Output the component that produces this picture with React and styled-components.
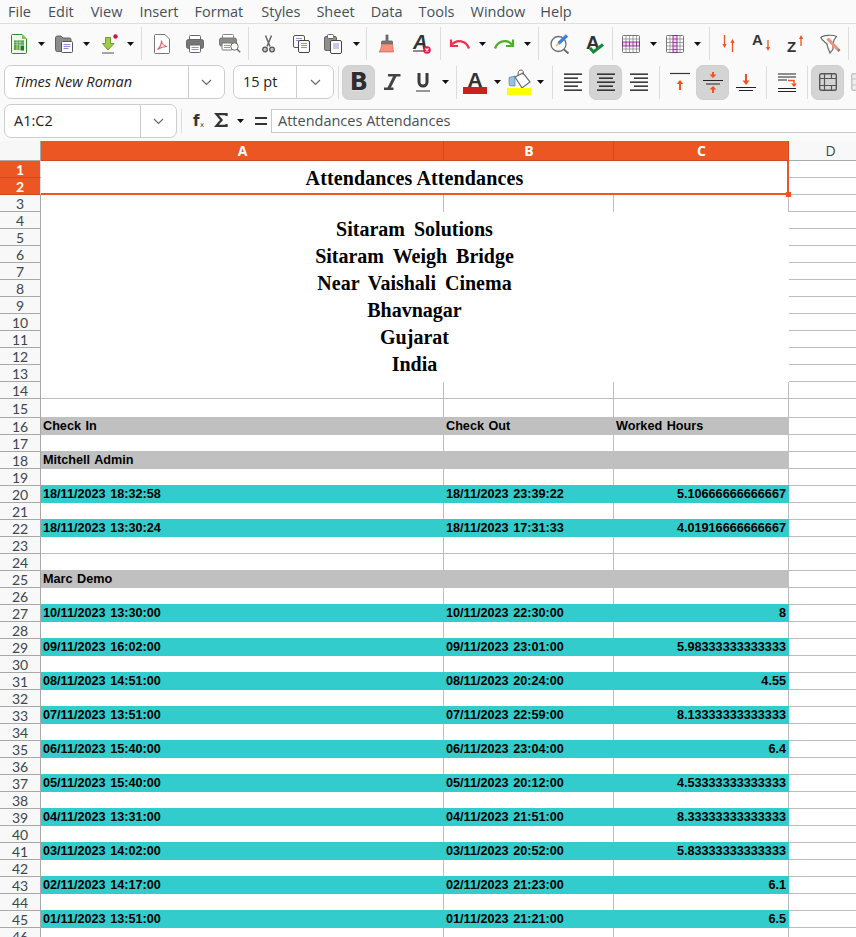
import React from "react";
import styled, { createGlobalStyle } from "styled-components";

const UI_FONT = `"Open Sans", "Noto Sans", sans-serif`;
const ORANGE = "#ec5622";

const GlobalStyle = createGlobalStyle`
  html, body {
    margin: 0;
    padding: 0;
    background: #fafafa;
  }
  svg {
    overflow: visible;
  }
`;

const Window = styled.div`
  width: 856px;
  height: 937px;
  overflow: hidden;
  background: #fafafa;
  font-family: ${UI_FONT};
  color: #3d3d3d;
`;

const MenuBar = styled.div`
  display: flex;
  height: 23px;
  border-bottom: 1px solid #dedede;
  font-size: 14.5px;
  line-height: 23px;
  color: #45505a;
`;

const MenuItem = styled.span`
  margin-left: ${(p) => p.$gap}px;
`;

const Toolbar = styled.div`
  display: flex;
  align-items: center;
  height: ${(p) => p.$h}px;
`;

const Tool = styled.div`
  display: flex;
  flex: none;
  margin-left: ${(p) => p.$gap}px;
`;

const Sep = styled.div`
  flex: none;
  width: 1px;
  height: 33px;
  margin-left: ${(p) => p.$gap}px;
  background: #dddddd;
`;

const ToggleButton = styled.div`
  display: flex;
  flex: none;
  align-items: center;
  justify-content: center;
  width: 33px;
  height: 35px;
  margin-left: ${(p) => p.$gap}px;
  box-sizing: border-box;
  border: 1px solid #cfcfcf;
  border-radius: 7px;
  background: #d4d4d4;
`;

const Combo = styled.div`
  display: flex;
  flex: none;
  width: ${(p) => p.$w}px;
  height: 34px;
  margin-left: ${(p) => p.$gap}px;
  box-sizing: border-box;
  border: 1px solid #cdcdcd;
  border-radius: 7px;
  background: #ffffff;
`;

const ComboText = styled.div`
  flex: 1;
  padding-left: 9px;
  font-size: 14.5px;
  line-height: 32px;
  color: #222222;
  font-style: ${(p) => (p.$italic ? "italic" : "normal")};
  white-space: nowrap;
`;

const ComboArrow = styled.div`
  display: flex;
  flex: none;
  align-items: center;
  justify-content: center;
  width: ${(p) => p.$w}px;
  border-left: 1px solid #cdcdcd;
`;

const FormulaBar = styled.div`
  display: flex;
  align-items: flex-start;
  height: 37px;
  padding-top: 3px;
`;

const FormulaTool = styled(Tool)`
  margin-top: ${(p) => p.$top}px;
`;

const FormulaSep = styled(Sep)`
  height: 24px;
  margin-top: 5px;
`;

const FormulaInput = styled.div`
  flex: 1;
  height: 24px;
  margin: 5px 0 0 4px;
  padding-left: 6px;
  box-sizing: border-box;
  border: 1px solid #c9c9c9;
  border-right: 0;
  background: #ffffff;
  font-size: 14.5px;
  line-height: 22px;
  color: #45505a;
  white-space: nowrap;
`;

const Sheet = styled.div`
  display: grid;
  grid-template-columns: 41px 403px 170px 175px 84px;
  grid-template-rows: 20px repeat(14, 17px) 19px repeat(31, 17px);
  background: #ffffff;
`;

const Corner = styled.div`
  background: #f7f7f7;
  border-right: 1px solid #a8a8a8;
  border-bottom: 1px solid #a8a8a8;
`;

const ColHead = styled.div`
  display: flex;
  align-items: center;
  justify-content: center;
  box-sizing: border-box;
  padding-left: ${(p) => (p.$on ? 1 : 0)}px;
  font-size: 14px;
  font-weight: ${(p) => (p.$on ? 700 : 400)};
  color: ${(p) => (p.$on ? "#ffffff" : "#3c4650")};
  background: ${(p) => (p.$on ? ORANGE : "#f8f8f8")};
  border-right: 1px solid ${(p) => (p.$on ? "#cf4a1c" : "#a8a8a8")};
  border-bottom: 1px solid ${(p) => (p.$on ? "#cf4a1c" : "#a8a8a8")};
`;

const RowHead = styled.div`
  display: flex;
  align-items: center;
  justify-content: center;
  box-sizing: border-box;
  padding-top: 1px;
  font-family: Lato, "Open Sans", sans-serif;
  font-size: 14px;
  line-height: 1;
  font-weight: ${(p) => (p.$on ? 700 : 400)};
  color: ${(p) => (p.$on ? "#ffffff" : "#3c4650")};
  background: ${(p) => (p.$on ? ORANGE : "#f8f8f8")};
  border-right: 1px solid ${(p) => (p.$on ? "#e0e0e0" : "#a8a8a8")};
  border-bottom: 1px solid ${(p) => (p.$on ? "#cf4a1c" : "#a8a8a8")};
`;

const Cell = styled.div`
  box-sizing: border-box;
  min-width: 0;
  padding: 0 2px;
  font-family: "Liberation Sans", Arial, sans-serif;
  font-size: 12.67px;
  font-weight: 700;
  word-spacing: 1px;
  color: #000000;
  white-space: nowrap;
  text-align: ${(p) => (p.$right ? "right" : "left")};
  border-right: 1px solid ${(p) => p.$fill || "#bdbdbd"};
  border-bottom: ${(p) => (p.$noBottom ? "0" : `1px solid ${p.$fill || "#bdbdbd"}`)};
  background: ${(p) => p.$fill || "#ffffff"};
  margin-top: ${(p) => (p.$fill ? "-1px" : "0")};
  line-height: ${(p) => (p.$fill ? "18px" : "16px")};
`;

const OuterCell = styled.div`
  box-sizing: border-box;
  background: #ffffff;
  border-bottom: 1px solid #bdbdbd;
`;

const TitleCell = styled.div`
  position: relative;
  grid-column: span 3;
  grid-row: span 2;
  display: flex;
  align-items: center;
  justify-content: center;
  box-sizing: border-box;
  padding: 2px 0 0 1px;
  border-right: 2px solid ${ORANGE};
  border-bottom: 2px solid ${ORANGE};
  background: #ffffff;
  font-family: "Liberation Serif", "Times New Roman", serif;
  font-size: 20px;
  font-weight: 700;
  letter-spacing: 0.12px;
  color: #000000;
`;

const FillHandle = styled.div`
  position: absolute;
  right: -4px;
  bottom: -4px;
  z-index: 2;
  width: 5px;
  height: 5px;
  background: ${ORANGE};
`;

const AddressCell = styled.div`
  grid-column: span 3;
  grid-row: span 10;
  display: flex;
  flex-direction: column;
  align-items: center;
  justify-content: center;
  padding-right: 1px;
  background: #ffffff;
  font-family: "Liberation Serif", "Times New Roman", serif;
  font-size: 20px;
  font-weight: 700;
  line-height: 27px;
  word-spacing: 4px;
  color: #000000;
`;

const G = "#666666";
const LAV = "#8f91d8";
const SORT = "#ea5522";

const Caret = () => (
  <svg width="7" height="4" viewBox="0 0 7 4">
    <path d="M0 0h7L3.5 4z" fill="#111" />
  </svg>
);

const Chevron = () => (
  <svg width="11" height="7" viewBox="0 0 11 7">
    <path d="M1 1l4.5 4.5L10 1" fill="none" stroke="#666" strokeWidth="1.1" />
  </svg>
);

const SheetIcon = () => (
  <svg width="16" height="20" viewBox="0 0 16 20">
    <path d="M.5 1.5a1 1 0 0 1 1-1H11l4.5 4.5v13.5a1 1 0 0 1-1 1h-13a1 1 0 0 1-1-1z" fill="#eef7ea" stroke="#2f8a2c" />
    <path d="M11 .5V5h4.5z" fill="#8bc34a" />
    <path d="M3 6.5h10v4.5H3z" fill="#2f8a2c" />
    <path d="M3 11h5.5v5H3z" fill="#5aa63c" />
    <path d="M9.5 11.5h3.5v5H9.5z" fill="#1f7a24" />
    <path d="M3 8.2h10M3 10.2h10M6 6.5v9.5M9 6.5v4" stroke="#dff0d8" strokeWidth=".7" />
  </svg>
);

const FolderIcon = () => (
  <svg width="18" height="18" viewBox="0 0 18 18">
    <path d="M.5 3a2 2 0 0 1 2-2h3.5l2 2h6.5a1.5 1.5 0 0 1 1.5 1.5V15a1.5 1.5 0 0 1-1.5 1.5h-12a2 2 0 0 1-2-2z" fill="#8c8c8c" stroke="#606060" />
    <rect x="6.5" y="6.5" width="11" height="11" rx="1" fill="#fff" stroke="#555" />
    <path d="M8.5 9.5h7M8.5 11.5h7M8.5 13.5h5" stroke={LAV} />
  </svg>
);

const DownloadIcon = () => (
  <svg width="16" height="20" viewBox="0 0 16 20">
    <path d="M3.5 3.5h5v6h3.5L6 16 .5 9.5h3z" fill="#9ccb4e" stroke="#6d9a2a" />
    <path d="M0 19h12" stroke="#6a6a6a" strokeWidth="1.2" />
    <circle cx="13.5" cy="2.5" r="2.2" fill="#d6123f" />
  </svg>
);

const PdfIcon = () => (
  <svg width="16" height="20" viewBox="0 0 16 20">
    <path d="M.5 1.5a1 1 0 0 1 1-1H11l4.5 4.5v13.5a1 1 0 0 1-1 1h-13a1 1 0 0 1-1-1z" fill="#fff" stroke="#777" />
    <path d="M3.5 15.5C6 13.5 7.5 10 7.5 6.5c0 3 2.5 5.5 5.5 6-3.5 0-6.5 1-9.5 3z" fill="none" stroke="#e4606a" strokeWidth="1.2" />
  </svg>
);

const PrintIcon = () => (
  <svg width="18" height="18" viewBox="0 0 18 18">
    <rect x="3.5" y=".5" width="11" height="6" rx="1" fill="#fff" stroke={G} />
    <rect x=".5" y="4.5" width="17" height="9" rx="2" fill="#767676" stroke="#666" />
    <rect x="3.5" y="10" width="11" height="7.5" rx="1" fill="#fff" stroke={G} />
    <path d="M5.5 12.5h7M5.5 14.5h7" stroke={LAV} />
  </svg>
);

const PreviewIcon = () => (
  <svg width="22" height="19" viewBox="0 0 22 19">
    <rect x="3.5" y=".5" width="11" height="5" rx="1" fill="#fff" stroke="#888" />
    <rect x=".5" y="4" width="17" height="8" rx="2" fill="#8a8a8a" stroke="#777" />
    <rect x="3" y="9" width="10" height="7" rx="1" fill="#fff" stroke="#777" />
    <path d="M5 11.5h6M5 13.5h6" stroke={LAV} />
    <circle cx="15.5" cy="12.5" r="3.7" fill="#fff" stroke="#666" />
    <path d="M18.2 15.2l3 3" stroke="#666" strokeWidth="1.4" />
  </svg>
);

const ScissorsIcon = () => (
  <svg width="13" height="18" viewBox="0 0 13 18">
    <path d="M3.5.5L8 11.5M9.5.5L5 11.5" stroke="#666" strokeWidth="1.5" fill="none" />
    <circle cx="3" cy="14.5" r="2.3" fill="#c9c9c9" stroke="#555" strokeWidth="1.3" />
    <circle cx="10" cy="14.5" r="2.3" fill="#c9c9c9" stroke="#555" strokeWidth="1.3" />
  </svg>
);

const CopyIcon = () => (
  <svg width="17" height="18" viewBox="0 0 17 18">
    <rect x=".5" y=".5" width="11" height="12" rx="1.5" fill="#fff" stroke="#555" />
    <path d="M3 3.5h6M3 5.5h3" stroke={LAV} />
    <rect x="5.5" y="5.5" width="11" height="12" rx="1.5" fill="#fff" stroke="#444" />
    <path d="M8 8.5h6M8 10.5h6M8 12.5h6" stroke={LAV} />
  </svg>
);

const PasteIcon = () => (
  <svg width="18" height="20" viewBox="0 0 18 20">
    <rect x=".5" y="2.5" width="12" height="14" rx="1.5" fill="#8f8f8f" stroke="#666" />
    <rect x="3.5" y=".5" width="6" height="4" rx="1" fill="#fff" stroke="#666" />
    <rect x="6.5" y="6.5" width="11" height="13" rx="1.5" fill="#fff" stroke="#444" />
    <path d="M9 10h6M9 12h6M9 14h6" stroke={LAV} />
  </svg>
);

const BrushIcon = () => (
  <svg width="15" height="19" viewBox="0 0 15 19">
    <path d="M7 1h2v6h3.5a1 1 0 0 1 1 1v2h-11V8a1 1 0 0 1 1-1H7z" fill="#777" stroke="#5e5e5e" strokeWidth=".8" />
    <path d="M2.5 10h11l1 8H0c1.5-2 2.5-5 2.5-8z" fill="#f8917c" stroke="#b7604f" strokeWidth=".6" />
  </svg>
);

const ClearIcon = () => (
  <svg width="18" height="20" viewBox="0 0 18 20">
    <text x="0" y="15" fontFamily="Liberation Sans" fontSize="20" fontWeight="700" fontStyle="italic" fill="#333">A</text>
    <path d="M0 17h13" stroke="#444" strokeWidth="1.2" />
    <circle cx="14" cy="16" r="3.8" fill="#d81f45" />
    <path d="M12.5 14.5l3 3M15.5 14.5l-3 3" stroke="#fff" strokeWidth="1.2" />
  </svg>
);

const UndoIcon = () => (
  <svg width="21" height="10" viewBox="0 0 21 10">
    <path d="M20 9.5C17 1.5 8 0 3 5.5" fill="none" stroke="#f0304e" strokeWidth="2.2" />
    <path d="M2 .5V7h7" fill="none" stroke="#f0304e" strokeWidth="2.2" />
  </svg>
);

const RedoIcon = () => (
  <svg width="21" height="10" viewBox="0 0 21 10">
    <path d="M1 9.5C4 1.5 13 0 18 5.5" fill="none" stroke="#4caf2a" strokeWidth="2.2" />
    <path d="M19 .5V7h-7" fill="none" stroke="#4caf2a" strokeWidth="2.2" />
  </svg>
);

const FindIcon = () => (
  <svg width="20" height="20" viewBox="0 0 20 20">
    <circle cx="8.5" cy="10" r="7.5" fill="#fff" stroke="#6e6e6e" strokeWidth="1.3" />
    <path d="M14 15.5l4.5 4" stroke="#6e6e6e" strokeWidth="2" />
    <path d="M8.5 9.5L17 1.5" stroke="#3c7fe2" strokeWidth="3.2" />
    <path d="M6 12l2.5-2.5" stroke="#f0b070" strokeWidth="1.6" />
  </svg>
);

const SpellIcon = () => (
  <svg width="18" height="20" viewBox="0 0 18 20">
    <text x="0" y="14.5" fontFamily="Liberation Sans" fontSize="19" fontWeight="700" fill="#333">A</text>
    <path d="M4 14l3.5 4L17 10.5" fill="none" stroke="#17853a" strokeWidth="3" />
  </svg>
);

const RowsIcon = () => (
  <svg width="18" height="18" viewBox="0 0 18 18">
    <rect x=".5" y=".5" width="17" height="17" rx="1" fill="#fff" stroke="#777" />
    <path d="M.5 4h17M.5 14h17M4 .5v17M7.5 .5v17M11 .5v17M14.5 .5v17" stroke="#888" strokeWidth=".8" />
    <rect x=".5" y="7" width="17" height="4" fill="#ecd9ec" stroke="#8f1f8f" strokeWidth=".9" />
    <path d="M4 7v4M7.5 7v4M11 7v4M14.5 7v4" stroke="#8f1f8f" strokeWidth=".8" />
  </svg>
);

const ColsIcon = () => (
  <svg width="18" height="18" viewBox="0 0 18 18">
    <rect x=".5" y=".5" width="17" height="17" rx="1" fill="#fff" stroke="#777" />
    <path d="M.5 4h17M.5 7.5h17M.5 11h17M.5 14.5h17M4 .5v17M14 .5v17" stroke="#888" strokeWidth=".8" />
    <rect x="7" y=".5" width="4" height="17" fill="#ecd9ec" stroke="#8f1f8f" strokeWidth=".9" />
    <path d="M7 4h4M7 7.5h4M7 11h4M7 14.5h4" stroke="#8f1f8f" strokeWidth=".8" />
  </svg>
);

const SortIcon = () => (
  <svg width="13" height="17" viewBox="0 0 13 17">
    <path d="M2.5 0v10M10.5 6.5V17" stroke={SORT} strokeWidth="1.3" />
    <path d="M.4 9h4.2l-2.1 4zM8.4 8h4.2l-2.1-4z" fill={SORT} />
  </svg>
);

const SortAscIcon = () => (
  <svg width="19" height="19" viewBox="0 0 19 19">
    <text x="0" y="10.5" fontFamily="Liberation Sans" fontSize="15" fontWeight="700" fill="#333">A</text>
    <path d="M16 6v8" stroke={SORT} strokeWidth="1.3" />
    <path d="M13.9 13h4.2L16 17z" fill={SORT} />
  </svg>
);

const SortDescIcon = () => (
  <svg width="19" height="19" viewBox="0 0 19 19">
    <text x="1" y="18" fontFamily="Liberation Sans" fontSize="15" fontWeight="700" fill="#333">Z</text>
    <path d="M15 4v8" stroke={SORT} strokeWidth="1.3" />
    <path d="M12.9 5h4.2L15 1z" fill={SORT} />
  </svg>
);

const FilterIcon = () => (
  <svg width="21" height="20" viewBox="0 0 21 20">
    <path d="M.8 3.5C3 1 13 .5 16.5 2.5L14 6l-1 4v5l-3 4-2-5-1-4C5 8 2 6.5.8 3.500z" fill="#fff" stroke="#6a6a6a" strokeWidth="1.2" />
    <path d="M7.5 4.5L18 15.5" stroke="#f0917e" strokeWidth="3.2" />
    <path d="M18 15.5l1.5 1.5" stroke="#777" strokeWidth="2.6" />
  </svg>
);

const BoldIcon = () => (
  <svg width="24" height="24" viewBox="0 0 24 24">
    <text x="12" y="20" textAnchor="middle" fontFamily="DejaVu Sans" fontSize="24" fontWeight="700" fill="#2d2d2d" stroke="#fff" strokeWidth=".5" paintOrder="stroke">B</text>
  </svg>
);

const ItalicIcon = () => (
  <svg width="17" height="16" viewBox="0 0 17 16">
    <path d="M4 1.2h12.5M0 14.8h9.5" stroke="#444" strokeWidth="2.4" />
    <path d="M11.5 1L4.5 15" stroke="#444" strokeWidth="3" />
  </svg>
);

const UnderlineIcon = () => (
  <svg width="14" height="19" viewBox="0 0 14 19">
    <path d="M3 0v9a4 4 0 0 0 8 0V0" fill="none" stroke="#3c3c3c" strokeWidth="3" />
    <path d="M0 18h14" stroke="#555" strokeWidth="1.2" />
  </svg>
);

const FontColorIcon = () => (
  <svg width="24" height="24" viewBox="0 0 24 24">
    <text x="12" y="17" textAnchor="middle" fontFamily="Liberation Sans" fontSize="21" fontWeight="700" fill="#333">A</text>
    <rect y="17" width="24" height="7" fill="#c9211e" />
  </svg>
);

const FillColorIcon = () => (
  <svg width="24" height="26" viewBox="0 0 24 26">
    <path d="M2 8.5L8 7v10H4a2 2 0 0 1-2-2z" fill="#8ec4e6" stroke="#557" strokeWidth=".5" />
    <path d="M8 8l8-4 7 9-8 6z" fill="#fff" stroke="#666" strokeWidth="1.2" />
    <path d="M11 6c0-3 1-5 3-5s3 2 2 5" fill="none" stroke="#666" />
    <rect y="19" width="24" height="7" fill="#ffff00" />
  </svg>
);

const AlignIcon = ({ kind }) => {
  const wide = [0, 2, 4];
  const ys = [1, 5, 9, 13, 17];
  return (
    <svg width="18" height="18" viewBox="0 0 18 18">
      {ys.map((y, i) => {
        const w = wide.includes(i) ? 18 : 14;
        const x = kind === "left" ? 0 : kind === "center" ? (18 - w) / 2 : 18 - w;
        return <rect key={y} x={x} y={y - 0.5} width={w} height="1.3" fill="#111" />;
      })}
    </svg>
  );
};

const VTopIcon = () => (
  <svg width="20" height="20" viewBox="0 0 20 20">
    <path d="M0 1.5h20" stroke="#333" strokeWidth="1.2" />
    <path d="M10 11v7" stroke={SORT} strokeWidth="2" />
    <path d="M10 8l3.5 4h-7z" fill={SORT} />
  </svg>
);

const VCenterIcon = () => (
  <svg width="20" height="22" viewBox="0 0 20 22">
    <path d="M0 9.5h20M3 13h14" stroke="#222" strokeWidth="1.2" />
    <path d="M10 1v3M10 18v4" stroke={SORT} strokeWidth="2" />
    <path d="M10 7L6.5 3.5h7zM10 15l-3.5 3.5h7z" fill={SORT} />
  </svg>
);

const VBottomIcon = () => (
  <svg width="20" height="20" viewBox="0 0 20 20">
    <path d="M0 15.5h20M3 18.5h14" stroke="#222" strokeWidth="1.2" />
    <path d="M10 2v7" stroke={SORT} strokeWidth="2" />
    <path d="M10 13L6.5 8.5h7z" fill={SORT} />
  </svg>
);

const WrapIcon = () => (
  <svg width="18" height="19" viewBox="0 0 18 19">
    <path d="M0 1h18M0 4h18M0 7h9M0 15.5h18M0 18.5h18" stroke="#222" strokeWidth="1.2" />
    <path d="M10 7.5h6v3" fill="none" stroke={SORT} strokeWidth="1.4" />
    <path d="M16 14l-3-3.5h6z" fill={SORT} />
  </svg>
);

const BorderIcon = () => (
  <svg width="18" height="18" viewBox="0 0 18 18">
    <rect x=".7" y=".7" width="16.6" height="16.6" rx="1.5" fill="none" stroke="#555" strokeWidth="1.4" />
    <path d="M.7 5.5h16.6M.7 12.5h16.6M5.5.7v16.6M12.5.7v4.8M12.5 12.5v4.8" stroke="#555" strokeWidth="1.2" />
  </svg>
);

const FadedBorderIcon = () => (
  <svg width="18" height="18" viewBox="0 0 18 18">
    <rect x=".7" y=".7" width="16.6" height="16.6" rx="1.5" fill="#eee" stroke="#c4c4c4" strokeWidth="1.4" />
    <path d="M.7 6h16.6M.7 12h16.6M6 .7v16.6" stroke="#c4c4c4" />
  </svg>
);

const FxIcon = () => (
  <svg width="12" height="15" viewBox="0 0 12 15">
    <text x="0" y="13" fontFamily="DejaVu Sans" fontSize="15" fontWeight="700" fill="#333">f</text>
    <text x="7" y="14" fontFamily="DejaVu Sans" fontSize="7" fill="#444">x</text>
  </svg>
);

const SigmaIcon = () => (
  <svg width="12" height="14" viewBox="0 0 12 14">
    <path d="M11.5 3V1.2h-10L6.5 7l-5 5.8h10V11" fill="none" stroke="#333" strokeWidth="2.3" />
  </svg>
);

const EqualsIcon = () => (
  <svg width="12" height="8" viewBox="0 0 12 8">
    <path d="M0 1h12M0 7h12" stroke="#333" strokeWidth="2" />
  </svg>
);

const topTools = [
  [SheetIcon, 11], [Caret, 11], [FolderIcon, 10], [Caret, 10], [DownloadIcon, 12], [Caret, 9], [null, 7],
  [PdfIcon, 12], [PrintIcon, 16], [PreviewIcon, 15], [null, 7],
  [ScissorsIcon, 13], [CopyIcon, 18], [PasteIcon, 14], [Caret, 11], [null, 6],
  [BrushIcon, 12], [ClearIcon, 19], [null, 9],
  [UndoIcon, 8], [Caret, 9], [RedoIcon, 8], [Caret, 9], [null, 7],
  [FindIcon, 11], [SpellIcon, 16], [null, 8],
  [RowsIcon, 9], [Caret, 10], [ColsIcon, 9], [Caret, 10], [null, 8],
  [SortIcon, 12], [SortAscIcon, 17], [SortDescIcon, 15], [FilterIcon, 15], [null, 7],
];

const menus = [
  ["File", 8], ["Edit", 17], ["View", 17], ["Insert", 17], ["Format", 16], ["Styles", 18],
  ["Sheet", 16], ["Data", 16], ["Tools", 16], ["Window", 16], ["Help", 15],
];

const address = ["Sitaram Solutions", "Sitaram Weigh Bridge", "Near Vaishali Cinema", "Bhavnagar", "Gujarat", "India"];

const GRAY = "#c0c0c0";
const TEAL = "#33cccc";

const rowsData = {
  16: { fill: GRAY, cells: ["Check In", "Check Out", "Worked Hours"] },
  18: { fill: GRAY, cells: ["Mitchell Admin", "", ""] },
  20: { fill: TEAL, cells: ["18/11/2023 18:32:58", "18/11/2023 23:39:22", "5.10666666666667"], num: true },
  22: { fill: TEAL, cells: ["18/11/2023 13:30:24", "18/11/2023 17:31:33", "4.01916666666667"], num: true },
  25: { fill: GRAY, cells: ["Marc Demo", "", ""] },
  27: { fill: TEAL, cells: ["10/11/2023 13:30:00", "10/11/2023 22:30:00", "8"], num: true },
  29: { fill: TEAL, cells: ["09/11/2023 16:02:00", "09/11/2023 23:01:00", "5.98333333333333"], num: true },
  31: { fill: TEAL, cells: ["08/11/2023 14:51:00", "08/11/2023 20:24:00", "4.55"], num: true },
  33: { fill: TEAL, cells: ["07/11/2023 13:51:00", "07/11/2023 22:59:00", "8.13333333333333"], num: true },
  35: { fill: TEAL, cells: ["06/11/2023 15:40:00", "06/11/2023 23:04:00", "6.4"], num: true },
  37: { fill: TEAL, cells: ["05/11/2023 15:40:00", "05/11/2023 20:12:00", "4.53333333333333"], num: true },
  39: { fill: TEAL, cells: ["04/11/2023 13:31:00", "04/11/2023 21:51:00", "8.33333333333333"], num: true },
  41: { fill: TEAL, cells: ["03/11/2023 14:02:00", "03/11/2023 20:52:00", "5.83333333333333"], num: true },
  43: { fill: TEAL, cells: ["02/11/2023 14:17:00", "02/11/2023 21:23:00", "6.1"], num: true },
  45: { fill: TEAL, cells: ["01/11/2023 13:51:00", "01/11/2023 21:21:00", "6.5"], num: true },
};

const SheetRow = ({ n }) => {
  const head = <RowHead $on={n <= 2}>{n}</RowHead>;
  if (n === 1) {
    return (
      <>
        {head}
        <TitleCell>
          Attendances Attendances
          <FillHandle />
        </TitleCell>
        <OuterCell />
      </>
    );
  }
  if (n === 2) return <>{head}<OuterCell /></>;
  if (n === 4) {
    return (
      <>
        {head}
        <AddressCell>
          {address.map((line) => <div key={line}>{line}</div>)}
        </AddressCell>
        <OuterCell />
      </>
    );
  }
  if (n > 4 && n <= 13) return <>{head}<OuterCell /></>;

  const row = rowsData[n];
  const cells = row ? row.cells : ["", "", ""];
  return (
    <>
      {head}
      {cells.map((text, i) => (
        <Cell key={i} $fill={row && row.fill} $right={row && row.num && i === 2} $noBottom={n === 3}>
          {text}
        </Cell>
      ))}
      <OuterCell />
    </>
  );
};

const rowNumbers = Array.from({ length: 46 }, (_, i) => i + 1);

export default function App() {
  return (
    <Window>
      <GlobalStyle />
      <MenuBar>
        {menus.map(([label, gap]) => <MenuItem key={label} $gap={gap}>{label}</MenuItem>)}
      </MenuBar>

      <Toolbar $h={39}>
        {topTools.map(([Icon, gap], i) =>
          Icon ? <Tool key={i} $gap={gap}><Icon /></Tool> : <Sep key={i} $gap={gap} />
        )}
      </Toolbar>

      <Toolbar $h={38}>
        <Combo $w={221} $gap={4}>
          <ComboText $italic>Times New Roman</ComboText>
          <ComboArrow $w={35}><Chevron /></ComboArrow>
        </Combo>
        <Combo $w={101} $gap={8}>
          <ComboText>15 pt</ComboText>
          <ComboArrow $w={36}><Chevron /></ComboArrow>
        </Combo>
        <Sep $gap={4} />
        <ToggleButton $gap={3}><BoldIcon /></ToggleButton>
        <Tool $gap={9}><ItalicIcon /></Tool>
        <Tool $gap={15}><UnderlineIcon /></Tool>
        <Tool $gap={12}><Caret /></Tool>
        <Sep $gap={7} />
        <Tool $gap={6}><FontColorIcon /></Tool>
        <Tool $gap={7}><Caret /></Tool>
        <Tool $gap={6}><FillColorIcon /></Tool>
        <Tool $gap={6}><Caret /></Tool>
        <Sep $gap={8} />
        <Tool $gap={11}><AlignIcon kind="left" /></Tool>
        <ToggleButton $gap={7}><AlignIcon kind="center" /></ToggleButton>
        <Tool $gap={8}><AlignIcon kind="right" /></Tool>
        <Sep $gap={11} />
        <Tool $gap={10}><VTopIcon /></Tool>
        <ToggleButton $gap={6}><VCenterIcon /></ToggleButton>
        <Tool $gap={7}><VBottomIcon /></Tool>
        <Sep $gap={10} />
        <Tool $gap={11}><WrapIcon /></Tool>
        <Sep $gap={11} />
        <ToggleButton $gap={3}><BorderIcon /></ToggleButton>
        <Tool $gap={7}><FadedBorderIcon /></Tool>
      </Toolbar>

      <FormulaBar>
        <Combo $w={173} $gap={4}>
          <ComboText>A1:C2</ComboText>
          <ComboArrow $w={35}><Chevron /></ComboArrow>
        </Combo>
        <FormulaSep $gap={4} />
        <FormulaTool $gap={11} $top={9}><FxIcon /></FormulaTool>
        <FormulaTool $gap={10} $top={9}><SigmaIcon /></FormulaTool>
        <FormulaTool $gap={10} $top={15}><Caret /></FormulaTool>
        <FormulaTool $gap={11} $top={13}><EqualsIcon /></FormulaTool>
        <FormulaInput>Attendances Attendances</FormulaInput>
      </FormulaBar>

      <Sheet>
        <Corner />
        <ColHead $on>A</ColHead>
        <ColHead $on>B</ColHead>
        <ColHead $on>C</ColHead>
        <ColHead>D</ColHead>
        {rowNumbers.map((n) => <SheetRow key={n} n={n} />)}
      </Sheet>
    </Window>
  );
}
